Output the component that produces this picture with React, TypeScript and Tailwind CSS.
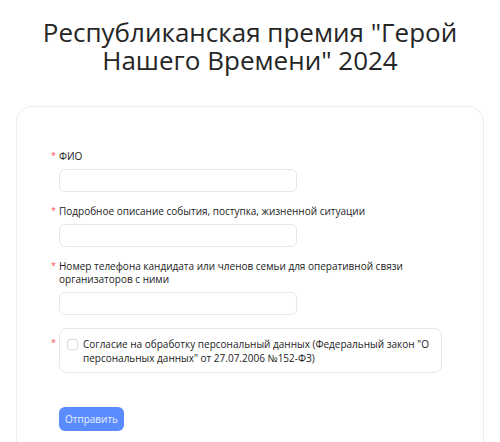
import { useState } from "react";

const fields = [
  { id: "fio", label: "ФИО" },
  { id: "desc", label: "Подробное описание события, поступка, жизненной ситуации" },
  {
    id: "phone",
    label: "Номер телефона кандидата или членов семьи для оперативной связи организаторов с ними",
  },
];

export default function App() {
  const [values, setValues] = useState<Record<string, string>>({});
  const [agree, setAgree] = useState(false);

  return (
    <div className="min-h-screen bg-white text-[#222] font-['Open_Sans',sans-serif]">
      <h1 className="pt-[18px] px-10 text-center text-[26px] leading-[28px] text-[#262626]">
        Республиканская премия "Герой Нашего Времени" 2024
      </h1>

      <div className="mx-4 mt-[32px] rounded-t-[16px] border border-b-0 border-[#eeeeee] pl-[34px] pr-10 pt-[43px] pb-6">
        {fields.map((f) => (
          <div key={f.id} className="mb-[13px]">
            <label className="flex text-[10px] leading-[13px] text-[#222]">
              <span className="w-2 shrink-0 text-[9px] leading-[11px] text-[#ff4d4f]">*</span>
              <span className="max-w-[360px]">{f.label}</span>
            </label>
            <input
              className="mt-[6px] ml-2 block h-[23px] w-[238px] rounded-[6px] border border-[#e6e6e6] px-2 text-[12px] outline-none"
              value={values[f.id] ?? ""}
              onChange={(e) => setValues({ ...values, [f.id]: e.target.value })}
            />
          </div>
        ))}

        <div className="flex">
          <span className="w-2 shrink-0 pt-[9px] text-[9px] leading-[11px] text-[#ff4d4f]">*</span>
          <label className="flex w-[383px] gap-[5px] rounded-[8px] border border-[#e6e6e6] px-[7px] pt-[8px] pb-[7px] text-[10px] leading-[14px]">
            <input
              type="checkbox"
              checked={agree}
              onChange={(e) => setAgree(e.target.checked)}
              className="mt-[2px] h-[11px] w-[11px] shrink-0 appearance-none rounded-[3px] border border-[#d9d9d9] checked:bg-[#5282ff]"
            />
            <span>
              Согласие на обработку персональный данных (Федеральный закон "О персональных данных" от
              27.07.2006 №152-ФЗ)
            </span>
          </label>
        </div>

        <button className="mt-[34px] ml-2 h-[24px] w-[65px] rounded-[6px] bg-[#5b8cff] text-[10px] text-[#e8eeff]">
          Отправить
        </button>
      </div>
    </div>
  );
}
